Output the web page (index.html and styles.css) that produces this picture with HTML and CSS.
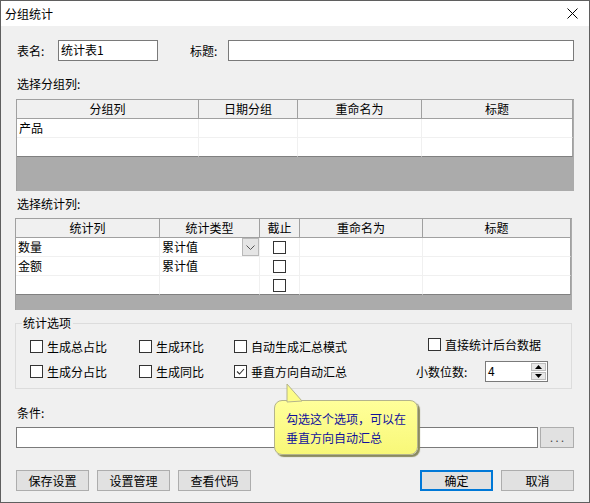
FILE: index.html
```html
<!DOCTYPE html>
<html>
<head>
<meta charset="utf-8">
<link rel="stylesheet" href="styles.css">
</head>
<body>
<div class="dialog">
  <div class="titlebar">
    <span class="title">分组统计</span>
    <svg class="close" width="11" height="11" viewBox="0 0 11 11"><path d="M0.5 0.5L10.5 10.5M10.5 0.5L0.5 10.5" stroke="#000" stroke-width="1" fill="none"/></svg>
  </div>
  <div class="content">
    <div class="row1">
      <span class="lbl lbl-name">表名:</span>
      <div class="input in-name">统计表1</div>
      <span class="lbl lbl-title">标题:</span>
      <div class="input in-title"></div>
    </div>

    <div class="section-label">选择分组列:</div>
    <div class="grid grid1">
      <div class="grow head">
        <div class="hc">分组列</div><div class="hc">日期分组</div><div class="hc">重命名为</div><div class="hc">标题</div>
      </div>
      <div class="grow body">
        <div class="bc">产品</div><div class="bc"></div><div class="bc"></div><div class="bc"></div>
      </div>
      <div class="grow body last">
        <div class="bc"></div><div class="bc"></div><div class="bc"></div><div class="bc"></div>
      </div>
    </div>

    <div class="section-label sl2">选择统计列:</div>
    <div class="grid grid2">
      <div class="grow head">
        <div class="hc">统计列</div><div class="hc">统计类型</div><div class="hc">截止</div><div class="hc">重命名为</div><div class="hc">标题</div>
      </div>
      <div class="grow body">
        <div class="bc">数量</div>
        <div class="bc combo">累计值<span class="dd"><svg width="9" height="5" viewBox="0 0 9 5"><path d="M0.5 0.5L4.5 4.5L8.5 0.5" stroke="#555" fill="none"/></svg></span></div>
        <div class="bc cc"><span class="cb"></span></div><div class="bc"></div><div class="bc"></div>
      </div>
      <div class="grow body">
        <div class="bc">金额</div><div class="bc">累计值</div>
        <div class="bc cc"><span class="cb"></span></div><div class="bc"></div><div class="bc"></div>
      </div>
      <div class="grow body last">
        <div class="bc"></div><div class="bc"></div>
        <div class="bc cc"><span class="cb"></span></div><div class="bc"></div><div class="bc"></div>
      </div>
    </div>

    <div class="group">
      <span class="legend">统计选项</span>
      <div class="opts">
        <label class="opt"><span class="cb"></span>生成总占比</label>
        <label class="opt"><span class="cb"></span>生成环比</label>
        <label class="opt"><span class="cb"></span>自动生成汇总模式</label>
        <label class="opt opt-direct"><span class="cb"></span>直接统计后台数据</label>
        <label class="opt"><span class="cb"></span>生成分占比</label>
        <label class="opt"><span class="cb"></span>生成同比</label>
        <label class="opt"><span class="cb checked"><svg width="11" height="11" viewBox="0 0 11 11"><path d="M2 5.5L4.5 8L9 3" stroke="#333" stroke-width="1.1" fill="none"/></svg></span>垂直方向自动汇总</label>
        <div class="decimals">
          <span class="dlabel">小数位数:</span>
          <div class="spin">
            <span class="spin-val">4</span>
            <span class="spin-btns">
              <span class="sb"><svg width="7" height="4" viewBox="0 0 7 4"><path d="M3.5 0L7 4H0Z" fill="#000"/></svg></span>
              <span class="sb"><svg width="7" height="4" viewBox="0 0 7 4"><path d="M0 0H7L3.5 4Z" fill="#000"/></svg></span>
            </span>
          </div>
        </div>
      </div>
    </div>

    <div class="section-label sl3">条件:</div>
    <div class="cond-row">
      <div class="input in-cond"></div>
      <div class="btn btn-dots">. . .</div>
    </div>

    <div class="btn-row">
      <div class="btn">保存设置</div>
      <div class="btn">设置管理</div>
      <div class="btn">查看代码</div>
      <div class="spacer"></div>
      <div class="btn btn-ok">确定</div>
      <div class="btn">取消</div>
    </div>
  </div>

  <div class="tip">
    <svg class="tip-tail" width="20" height="20" viewBox="0 0 20 20"><path d="M1 19L1 1L16 18Z" fill="#fdfd88" stroke="#b4b48c" stroke-width="1"/></svg>
    <div class="tip-body">勾选这个选项，可以在<br>垂直方向自动汇总</div>
  </div>
</div>
</body>
</html>
```

FILE: styles.css
```css
* { box-sizing: border-box; }
html, body { margin: 0; padding: 0; }
body {
  font-family: "Noto Sans CJK SC", "Noto Sans", sans-serif;
  font-size: 12px;
  color: #000;
  background: #f0f0f0;
}
.dialog {
  position: relative;
  width: 590px;
  height: 503px;
  border: 1px solid #5f5f5f;
  background: #f0f0f0;
  overflow: hidden;
}
.titlebar {
  height: 25px;
  background: #fff;
  display: flex;
  align-items: center;
  justify-content: space-between;
  padding: 0 11px 0 4px;
}
.title { font-size: 12px; line-height: 16px; }
.close { display: block; }

.content { padding: 0 14px 0 14px; }

.row1 {
  display: flex;
  align-items: center;
  margin-top: 14px;
  height: 21px;
}
.lbl { line-height: 16px; }
.lbl-name { margin-left: 2px; width: 41px; }
.lbl-title { margin-left: 32px; width: 38px; }
.input {
  height: 21px;
  border: 1px solid #7a7a7a;
  background: #fff;
  line-height: 18px;
  padding-left: 2px;
}
.in-name { width: 100px; }
.in-title { width: 346px; }

.section-label {
  margin-top: 15px;
  margin-left: 2px;
  height: 16px;
  line-height: 16px;
}
.sl2 { margin-top: 5px; }
.sl3 { margin-top: 16px; }

.grid {
  background: #ababab;
  border-top: 1px solid #a0a0a0;
  border-left: 1px solid #a0a0a0;
  height: 92px;
}
.grid1 { margin-top: 7px; margin-left: 1px; width: 558px; }
.grid2 { margin-top: 6px; margin-left: 0; width: 557px; }
.grow { display: grid; }
.grid1 .grow { grid-template-columns: 182px 99px 124px 151px; }
.grid2 .grow { grid-template-columns: 144px 100px 40px 123px 148px; }
.hc {
  height: 19px;
  background: #f0f0f0;
  border-right: 1px solid #a0a0a0;
  border-bottom: 1px solid #a0a0a0;
  text-align: center;
  line-height: 18px;
}
.bc {
  height: 19px;
  background: #fff;
  border-right: 1px solid #f0f0f0;
  border-bottom: 1px solid #f0f0f0;
  line-height: 18px;
  padding-left: 2px;
  white-space: nowrap;
}
.grow.body .bc:last-child { border-right: 1px solid #a0a0a0; }
.grow.last .bc { border-bottom: 1px solid #808080; }
.combo {
  display: flex;
  justify-content: space-between;
  padding-right: 0;
}
.dd {
  width: 17px;
  height: 18px;
  background: #e5e5e5;
  border: 1px solid #b9b9b9;
  display: flex;
  align-items: center;
  justify-content: center;
  margin-top: 0;
}
.cc { display: flex; align-items: center; justify-content: center; padding-left: 0; }

.cb {
  display: inline-flex;
  align-items: center;
  justify-content: center;
  width: 13px;
  height: 13px;
  border: 1px solid #333;
  background: #fff;
  flex: none;
}
.cb.checked svg { display: block; }

.group {
  position: relative;
  margin-top: 13px;
  width: 557px;
  height: 66px;
  border: 1px solid #dcdcdc;
}
.legend {
  position: absolute;
  left: 6px;
  top: -9px;
  padding: 0 2px 0 1px;
  background: #f0f0f0;
  line-height: 16px;
}
.opts {
  display: grid;
  grid-template-columns: 109px 95px 182px auto;
  grid-auto-rows: 25px;
  padding: 15px 0 0 14px;
}
.opt {
  display: flex;
  align-items: center;
  gap: 4px;
  height: 15px;
  line-height: 15px;
  white-space: nowrap;
}
.opt-direct { margin-left: 12px; margin-top: -2px; }
.decimals {
  display: flex;
  align-items: center;
  margin-top: -3px;
  height: 21px;
}
.dlabel { width: 69px; line-height: 16px; }
.spin {
  width: 63px;
  height: 21px;
  border: 1px solid #7a7a7a;
  background: #fff;
  display: flex;
  justify-content: space-between;
}
.spin-val { padding-left: 2px; line-height: 18px; }
.spin-btns {
  display: flex;
  flex-direction: column;
  width: 15px;
  margin: 1px;
  gap: 1px;
}
.sb {
  flex: 1;
  background: #e8e8e8;
  border: 1px solid #bdbdbd;
  display: flex;
  align-items: center;
  justify-content: center;
}
.sb svg { display: block; }

.cond-row {
  display: flex;
  margin-top: 6px;
  margin-left: 1px;
  gap: 2px;
}
.in-cond { width: 522px; }
.btn {
  height: 21px;
  width: 73px;
  background: #e1e1e1;
  border: 1px solid #adadad;
  text-align: center;
  line-height: 19px;
}
.btn-dots { width: 34px; color: #444; font-size: 11px; letter-spacing: 0; }
.btn-row {
  display: flex;
  gap: 8px;
  margin-top: 22px;
  margin-left: 1px;
  width: 558px;
}
.spacer { flex: 1; }
.btn-ok { border: 2px solid #0078d7; line-height: 17px; }

.tip {
  position: absolute;
  left: 273px;
  top: 382px;
  width: 148px;
  height: 75px;
}
.tip-tail {
  position: absolute;
  left: 12px;
  top: 0;
  z-index: 2;
}
.tip-body {
  position: absolute;
  left: 0;
  top: 17px;
  width: 144px;
  height: 55px;
  border: 1px solid #b4b48c;
  border-radius: 8px;
  background: linear-gradient(#ffff9a, #f8f878);
  box-shadow: 2px 2px 1px #8a8a60;
  color: #10109c;
  line-height: 19px;
  padding: 8px 0 0 11px;
  white-space: nowrap;
}
```
